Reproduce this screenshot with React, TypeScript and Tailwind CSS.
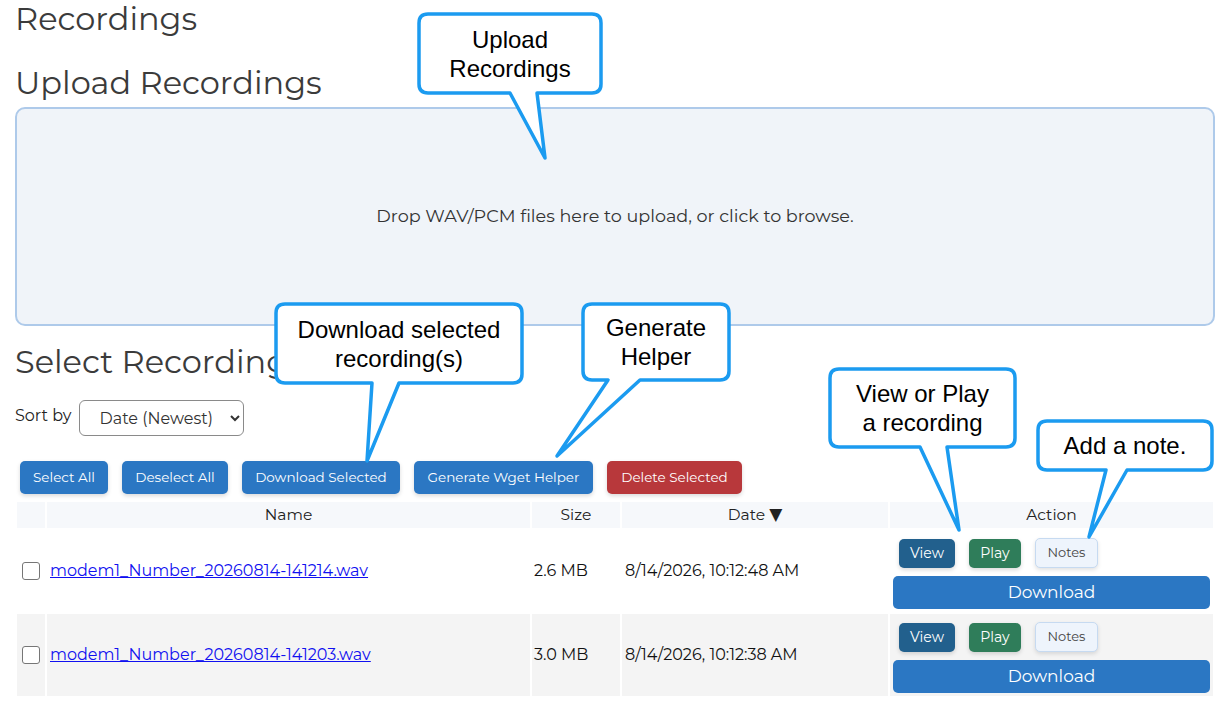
import React from "react";

interface Recording {
  name: string;
  size: string;
  date: string;
}

const recordings: Recording[] = [
  { name: "modem1_Number_20260814-141214.wav", size: "2.6 MB", date: "8/14/2026, 10:12:48 AM" },
  { name: "modem1_Number_20260814-141203.wav", size: "3.0 MB", date: "8/14/2026, 10:12:38 AM" },
];

interface CalloutSpec {
  x1: number;
  y1: number;
  x2: number;
  y2: number;
  bx1: number;
  bx2: number;
  px: number;
  py: number;
  lines: string[];
}

const callouts: CalloutSpec[] = [
  { x1: 419, y1: 14, x2: 601, y2: 93, bx1: 510, bx2: 537, px: 545, py: 158, lines: ["Upload", "Recordings"] },
  { x1: 276, y1: 304, x2: 522, y2: 383, bx1: 372, bx2: 399, px: 367, py: 461, lines: ["Download selected", "recording(s)"] },
  { x1: 583, y1: 304, x2: 729, y2: 380, bx1: 608, bx2: 640, px: 557, py: 456, lines: ["Generate", "Helper"] },
  { x1: 830, y1: 369, x2: 1015, y2: 447, bx1: 920, bx2: 947, px: 959, py: 530, lines: ["View or Play", "a recording"] },
  { x1: 1038, y1: 421, x2: 1212, y2: 470, bx1: 1106, bx2: 1127, px: 1089, py: 537, lines: ["Add a note."] },
];

function calloutPath(c: CalloutSpec) {
  const r = 9;
  return [
    `M ${c.x1 + r} ${c.y1}`,
    `H ${c.x2 - r}`,
    `Q ${c.x2} ${c.y1} ${c.x2} ${c.y1 + r}`,
    `V ${c.y2 - r}`,
    `Q ${c.x2} ${c.y2} ${c.x2 - r} ${c.y2}`,
    `H ${c.bx2}`,
    `L ${c.px} ${c.py}`,
    `L ${c.bx1} ${c.y2}`,
    `H ${c.x1 + r}`,
    `Q ${c.x1} ${c.y2} ${c.x1} ${c.y2 - r}`,
    `V ${c.y1 + r}`,
    `Q ${c.x1} ${c.y1} ${c.x1 + r} ${c.y1}`,
    "Z",
  ].join(" ");
}

function Callouts() {
  return (
    <>
      <svg
        className="pointer-events-none absolute left-0 top-0"
        width={1230}
        height={702}
        viewBox="0 0 1230 702"
      >
        {callouts.map((c, i) => (
          <path
            key={i}
            d={calloutPath(c)}
            fill="#ffffff"
            stroke="#1b9bf0"
            strokeWidth={3.5}
            strokeLinejoin="round"
          />
        ))}
      </svg>
      {callouts.map((c, i) => (
        <div
          key={i}
          className="pointer-events-none absolute flex flex-col items-center justify-center text-center text-[24px] leading-[29px] text-black"
          style={{
            left: c.x1,
            top: c.y1,
            width: c.x2 - c.x1,
            height: c.y2 - c.y1,
            fontFamily: '"Liberation Sans", Arial, sans-serif',
          }}
        >
          {c.lines.map((l) => (
            <span key={l} className="whitespace-nowrap">
              {l}
            </span>
          ))}
        </div>
      ))}
    </>
  );
}

const btn =
  "h-[33px] rounded-[5px] text-[13.5px] text-white shadow-[0_2px_4px_rgba(0,0,0,0.15)]";

export default function App() {
  return (
    <div
      className="relative h-[702px] w-[1230px] overflow-hidden bg-white text-[#212529]"
      style={{ fontFamily: 'Montserrat, "DejaVu Sans", sans-serif' }}
    >
      <div className="px-[15px]">
        <h1 className="text-[32px] font-normal leading-[38px] text-[#3b3b3b]">Recordings</h1>
        <h2 className="mt-[26px] text-[32px] font-normal leading-[38px] text-[#3b3b3b]">
          Upload Recordings
        </h2>

        <div className="mt-[5px] flex h-[219px] cursor-pointer items-center justify-center rounded-[10px] border-2 border-[#aecaea] bg-[#f0f4f9] text-[17.6px] text-[#333]">
          Drop WAV/PCM files here to upload, or click to browse.
        </div>

        <h2 className="mt-[17px] text-[32px] font-normal leading-[38px] text-[#3b3b3b]">
          Select Recordings
        </h2>

        <div className="mt-[19px] flex items-center gap-[7px]">
          <label className="-translate-y-[2px] text-[16px] text-[#222]">Sort by</label>
          <select className="h-[36px] w-[165px] rounded-[6px] border border-[#8a8a8a] bg-white pl-[16px] pr-[6px] text-[16px] text-[#333]">
            <option>Date (Newest)</option>
            <option>Date (Oldest)</option>
            <option>Name</option>
            <option>Size</option>
          </select>
        </div>

        <div className="mt-[25px] flex gap-[14px] pl-[5px]">
          <button className={`${btn} w-[88px] bg-[#2b77c3]`}>Select All</button>
          <button className={`${btn} w-[106px] bg-[#2b77c3]`}>Deselect All</button>
          <button className={`${btn} w-[158px] bg-[#2b77c3]`}>Download Selected</button>
          <button className={`${btn} w-[179px] bg-[#2b77c3]`}>Generate Wget Helper</button>
          <button className={`${btn} w-[135px] bg-[#b8383b]`}>Delete Selected</button>
        </div>

        <table className="mt-[6px] w-full table-fixed border-separate border-spacing-[2px]">
          <thead>
            <tr className="text-[15.5px] font-normal text-[#222]">
              <th className="h-[26px] w-[28px] bg-[#f6f8fb]"></th>
              <th className="h-[26px] w-[483px] bg-[#f6f8fb] font-normal">Name</th>
              <th className="h-[26px] w-[88px] bg-[#f6f8fb] font-normal">Size</th>
              <th className="h-[26px] w-[266px] bg-[#f6f8fb] font-normal">
                Date{" "}
                <span
                  className="text-[17px]"
                  style={{ fontFamily: '"DejaVu Sans", sans-serif' }}
                >
                  ▼
                </span>
              </th>
              <th className="h-[26px] bg-[#f6f8fb] font-normal">Action</th>
            </tr>
          </thead>
          <tbody>
            {recordings.map((r, i) => {
              const bg = i % 2 === 1 ? "bg-[#f4f4f4]" : "bg-white";
              return (
                <tr key={r.name} className="text-[16px] text-[#111]">
                  <td className={`${bg} h-[82px] pl-[5px] align-middle`}>
                    <input
                      type="checkbox"
                      className="block h-[18px] w-[18px] appearance-none rounded-[3px] border border-[#767676] bg-white"
                    />
                  </td>
                  <td className={`${bg} pl-[3px] align-middle`}>
                    <a href="#" className="text-[#1010f0] underline">
                      {r.name}
                    </a>
                  </td>
                  <td className={`${bg} pl-[2px] align-middle`}>{r.size}</td>
                  <td className={`${bg} pl-[3px] align-middle`}>{r.date}</td>
                  <td className={`${bg} p-[3px] align-top`}>
                    <div className="flex gap-[14px] pl-[6px] pt-[6px]">
                      <button className="h-[29px] w-[56px] rounded-[5px] bg-[#22608d] text-[14px] text-white shadow-[0_2px_4px_rgba(0,0,0,0.15)]">
                        View
                      </button>
                      <button className="h-[29px] w-[52px] rounded-[5px] bg-[#2f7d5a] text-[14px] text-white shadow-[0_2px_4px_rgba(0,0,0,0.15)]">
                        Play
                      </button>
                      <button className="h-[30px] w-[63px] -translate-y-px rounded-[5px] border border-[#c6daf1] bg-[#eef4fc] text-[13px] text-[#444] shadow-[0_2px_4px_rgba(0,0,0,0.12)]">
                        Notes
                      </button>
                    </div>
                    <button className="mt-[7px] h-[33px] w-full rounded-[5px] bg-[#2b77c3] text-[17px] text-white">
                      Download
                    </button>
                  </td>
                </tr>
              );
            })}
          </tbody>
        </table>
      </div>

      <Callouts />
    </div>
  );
}
